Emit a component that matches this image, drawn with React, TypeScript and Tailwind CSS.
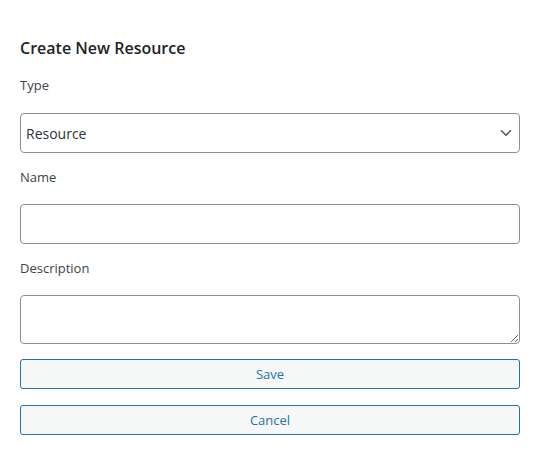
import React, { useState } from 'react';

const FONT = "font-['Segoe_UI','Open_Sans','Noto_Sans',sans-serif]";

const Chevron = () => (
  <svg width="12" height="8" viewBox="0 0 12 8" fill="none" className="pointer-events-none absolute right-[8px] top-1/2 -translate-y-1/2">
    <path d="M1.5 1.8 6 6.2 10.5 1.8" stroke="#50575e" strokeWidth="1.6" strokeLinecap="round" strokeLinejoin="round" />
  </svg>
);

export default function App() {
  const [type, setType] = useState('Resource');
  const [name, setName] = useState('');
  const [description, setDescription] = useState('');

  const fieldClass =
    'w-full rounded-[4px] border border-[#8c8f94] bg-white px-[5px] text-[14px] text-[#2c3338] outline-none';
  const buttonClass =
    'block h-[30px] w-full rounded-[3px] border border-[#2271b1] bg-[#f6f7f7] pt-px text-[13px] text-[#2271b1]';

  return (
    <div className={`${FONT} min-h-[469px] bg-white pl-5 pr-[19px] pt-[36px] text-[#3c434a]`}>
      <h2 className="text-[16px] font-semibold leading-[24px] text-[#1d2327]">Create New Resource</h2>

      <label className="mt-[15px] mb-[18px] block text-[13px] leading-5">Type</label>
      <div className="relative">
        <select
          value={type}
          onChange={(e) => setType(e.target.value)}
          className={`${fieldClass} h-10 appearance-none pr-6`}
        >
          <option value="Resource">Resource</option>
          <option value="Collection">Collection</option>
        </select>
        <Chevron />
      </div>

      <label className="mt-[14px] mb-[17px] block text-[13px] leading-5">Name</label>
      <input type="text" value={name} onChange={(e) => setName(e.target.value)} className={`${fieldClass} h-10`} />

      <label className="mt-[14px] mb-[17px] block text-[13px] leading-5">Description</label>
      <textarea
        value={description}
        onChange={(e) => setDescription(e.target.value)}
        className={`${fieldClass} block h-[49px] py-1`}
      />

      <button type="button" className={`${buttonClass} mt-[15px]`}>
        Save
      </button>
      <button type="button" className={`${buttonClass} mt-4`}>
        Cancel
      </button>
    </div>
  );
}
